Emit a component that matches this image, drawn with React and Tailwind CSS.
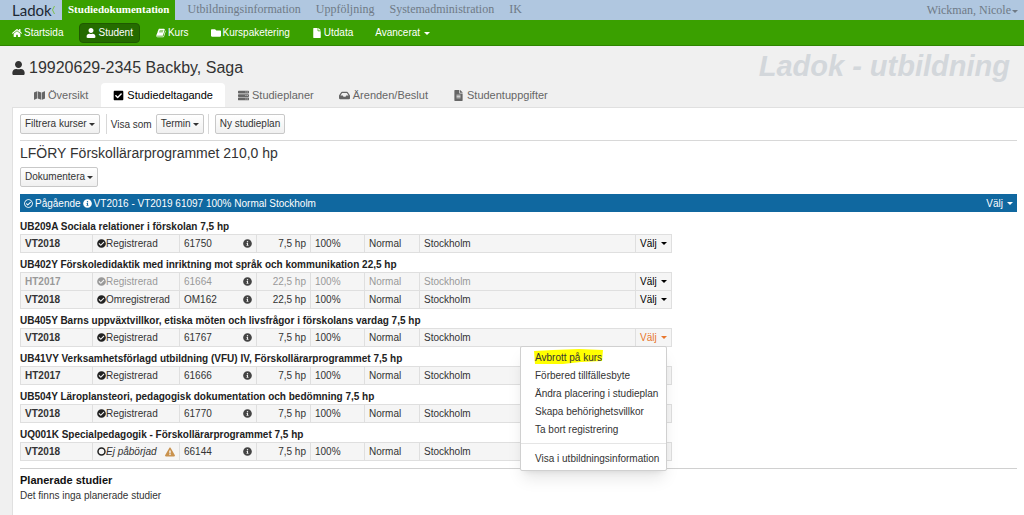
import {
  FaHome,
  FaUser,
  FaFolder,
  FaFile,
  FaMap,
  FaCheckSquare,
  FaServer,
  FaInbox,
  FaFileAlt,
  FaCheckCircle,
  FaRegCheckCircle,
  FaInfoCircle,
  FaExclamationTriangle,
} from 'react-icons/fa';

function BookIcon({ className }) {
  return (
    <svg className={className} viewBox="0 0 1664 1792" fill="currentColor">
      <path d="M1639 478q40 57 18 129l-275 906q-19 64-76.500 107.500t-122.500 43.500h-923q-77 0-148.500-53.500t-99.500-131.500q-24-67-2-127 0-4 3-27t4-37q1-8-3-21.500t-3-19.500q2-11 8-21t16.500-23.500 16.500-23.500q23-38 45-91.500t30-91.500q3-10 .5-30t-.5-28q3-11 17-28t17-23q21-36 42-92t25-90q1-9-2.500-32t.5-28q4-13 22-30.500t22-22.500q19-26 42.500-84.500t27.500-96.500q1-8-3-25.500t-2-26.500q2-8 9-18t18-23 17-21q8-12 16.500-30.500t15-35 16-36 19.500-32 26.500-23.500 36-11.500 47.500 5.500l-1 3q38-9 51-9h761q74 0 114 56t18 130l-274 906q-36 119-71.500 153.500t-128.500 34.500h-869q-27 0-38 15-11 16-1 43 24 70 144 70h923q29 0 56-15.500t35-41.500l300-987q7-22 5-57 38 15 59 43zm-1064 2q-4 13 2 22.500t20 9.500h608q13 0 25.500-9.500t16.500-22.500l21-64q4-13-2-22.500t-20-9.500h-608q-13 0-25.500 9.500t-16.500 22.500zm-83 256q-4 13 2 22.500t20 9.500h608q13 0 25.500-9.500t16.500-22.500l21-64q4-13-2-22.500t-20-9.500h-608q-13 0-25.500 9.500t-16.500 22.500z" />
    </svg>
  );
}

function RingIcon({ className }) {
  return (
    <svg className={className} viewBox="0 0 9 9" fill="none" stroke="currentColor" strokeWidth="1.5">
      <circle cx="4.5" cy="4.5" r="3.5" />
    </svg>
  );
}

const systemLinks = ['Utbildningsinformation', 'Uppföljning', 'Systemadministration', 'IK'];

const mainLinks = [
  { label: 'Startsida', icon: FaHome },
  { label: 'Student', icon: FaUser, active: true },
  { label: 'Kurs', icon: BookIcon },
  { label: 'Kurspaketering', icon: FaFolder },
  { label: 'Utdata', icon: FaFile },
];

const tabs = [
  { label: 'Översikt', icon: FaMap },
  { label: 'Studiedeltagande', icon: FaCheckSquare, active: true },
  { label: 'Studieplaner', icon: FaServer },
  { label: 'Ärenden/Beslut', icon: FaInbox },
  { label: 'Studentuppgifter', icon: FaFileAlt },
];

const courses = [
  {
    title: 'UB209A Sociala relationer i förskolan 7,5 hp',
    rows: [{ term: 'VT2018', status: 'Registrerad', code: '61750', credits: '7,5 hp' }],
  },
  {
    title: 'UB402Y Förskoledidaktik med inriktning mot språk och kommunikation 22,5 hp',
    rows: [
      { term: 'HT2017', status: 'Registrerad', code: '61664', credits: '22,5 hp', muted: true },
      { term: 'VT2018', status: 'Omregistrerad', code: 'OM162', credits: '22,5 hp' },
    ],
  },
  {
    title: 'UB405Y Barns uppväxtvillkor, etiska möten och livsfrågor i förskolans vardag 7,5 hp',
    rows: [{ term: 'VT2018', status: 'Registrerad', code: '61767', credits: '7,5 hp', open: true }],
  },
  {
    title: 'UB41VY Verksamhetsförlagd utbildning (VFU) IV, Förskollärarprogrammet 7,5 hp',
    rows: [{ term: 'HT2017', status: 'Registrerad', code: '61666', credits: '7,5 hp' }],
  },
  {
    title: 'UB504Y Läroplansteori, pedagogisk dokumentation och bedömning 7,5 hp',
    rows: [{ term: 'VT2018', status: 'Registrerad', code: '61770', credits: '7,5 hp' }],
  },
  {
    title: 'UQ001K Specialpedagogik - Förskollärarprogrammet 7,5 hp',
    rows: [{ term: 'VT2018', status: 'Ej påbörjad', code: '66144', credits: '7,5 hp', notStarted: true }],
  },
];

const menuItems = [
  'Förbered tillfällesbyte',
  'Ändra placering i studieplan',
  'Skapa behörighetsvillkor',
  'Ta bort registrering',
];

function Caret({ className = 'ml-1' }) {
  return (
    <svg className={`inline-block w-1.5 h-[3px] align-middle ${className}`} viewBox="0 0 6 3" fill="currentColor">
      <path d="M0 0h6L3 3z" />
    </svg>
  );
}

function ToolButton({ children, caret }) {
  return (
    <button
      type="button"
      className="h-5 px-1 border border-[#c8c8c8] rounded-xs bg-gradient-to-b from-white to-[#f0f0f0] text-[10px] leading-4 text-[#333] whitespace-nowrap"
    >
      {children}
      {caret && <Caret className="ml-0.5" />}
    </button>
  );
}

function CourseMenu() {
  return (
    <ul className="absolute right-1 top-full z-10 w-[147px] py-0.5 bg-white border border-[#d0d0d0] rounded-xs shadow-lg text-[#333] whitespace-nowrap">
      <li className="relative px-3.5 h-[18px] leading-[18px]">
        <svg className="absolute left-3 top-0 w-[70px] h-4" viewBox="0 0 70 16">
          <path d="M1 2 20 1 46 0 70 1 69 12 48 13 30 15 2 15z" fill="#ffff00" />
        </svg>
        <a href="#avbrott" className="relative">Avbrott på kurs</a>
      </li>
      {menuItems.map((item) => (
        <li key={item} className="px-3.5 h-[18px] leading-[18px]">
          <a href="#menu">{item}</a>
        </li>
      ))}
      <li className="mt-1 pt-1.5 px-3.5 border-t border-[#e5e5e5] leading-[18px]">
        <a href="#info">Visa i utbildningsinformation</a>
      </li>
    </ul>
  );
}

function CourseRow({ row }) {
  const cell = 'border border-[#dfdfdf] px-1 h-[18px] leading-4';
  const StatusIcon = row.notStarted ? RingIcon : FaCheckCircle;
  return (
    <tr className={row.muted ? 'text-[#999]' : 'text-[#333]'}>
      <td className={`${cell} font-bold`}>{row.term}</td>
      <td className={cell}>
        <div className="flex items-center">
          <StatusIcon className={`w-[9px] h-[9px] ${row.muted ? '' : 'text-[#222]'}`} />
          <span className={row.notStarted ? 'italic' : ''}>{row.status}</span>
          {row.notStarted && <FaExclamationTriangle className="ml-auto w-2.5 h-2.5 text-[#c9924e]" />}
        </div>
      </td>
      <td className={cell}>
        <div className="flex items-center justify-between">
          <span>{row.code}</span>
          <FaInfoCircle className="w-[9px] h-[9px] text-[#444]" />
        </div>
      </td>
      <td className={`${cell} text-right`}>{row.credits}</td>
      <td className={cell}>100%</td>
      <td className={cell}>Normal</td>
      <td className={cell}>Stockholm</td>
      <td className={`${cell} relative`}>
        <button type="button" className={`whitespace-nowrap ${row.open ? 'text-[#e8762c]' : 'text-black'}`}>
          Välj<Caret />
        </button>
        {row.open && <CourseMenu />}
      </td>
    </tr>
  );
}

function Course({ course }) {
  return (
    <section className="mb-[5px]">
      <h3 className="text-[10px] leading-[14px] font-bold text-[#222]">{course.title}</h3>
      <table className="w-[652px] table-fixed border-collapse bg-[#f5f5f5] text-[10px]">
        <colgroup>
          <col className="w-[72px]" />
          <col className="w-[87px]" />
          <col className="w-[77px]" />
          <col className="w-[54px]" />
          <col className="w-[54px]" />
          <col className="w-[55px]" />
          <col />
          <col className="w-[36px]" />
        </colgroup>
        <tbody>
          {course.rows.map((row) => (
            <CourseRow key={row.term} row={row} />
          ))}
        </tbody>
      </table>
    </section>
  );
}

function App() {
  return (
    <div className="min-h-screen flex flex-col bg-[#f0f0f0] text-[#333] font-['Liberation_Sans',Arial,sans-serif]">
      <header>
        <div className="flex h-5 bg-[#b0c7e0] text-[12px] leading-[18px] font-['Liberation_Serif',serif] text-[#6f7a86]">
          <a href="#ladok" className="flex items-center w-[62px] pl-3 font-['Lato',sans-serif] text-[15px] text-[#1c2733]">
            Ladok
            <svg className="w-[3px] h-2" viewBox="0 0 3 8" fill="none" stroke="#7cc04a">
              <path d="M2.500 0 0.500 4l2 4" />
            </svg>
          </a>
          <a href="#dok" className="px-1.5 bg-[#3aa000] text-[11px] text-white font-bold">Studiedokumentation</a>
          <nav className="flex gap-[15px] pl-3">
            {systemLinks.map((label) => (
              <a key={label} href="#system">{label}</a>
            ))}
          </nav>
          <button type="button" className="ml-auto pr-1.5">
            Wickman, Nicole<Caret className="ml-px" />
          </button>
        </div>
        <nav className="flex items-center h-[26px] pl-1.5 gap-2.5 bg-[#3aa000] border-b border-[#2f8400] text-[10px] text-white">
          {mainLinks.map(({ label, icon: Icon, active }) => (
            <a
              key={label}
              href="#main"
              className={`flex items-center gap-0.5 h-5 px-1.5 rounded-sm ${
                active ? 'bg-[#256b00] border border-[#1f5a00]' : ''
              }`}
            >
              <Icon className="w-2.5 h-2.5" />
              {label}
            </a>
          ))}
          <button type="button" className="px-1.5">
            Avancerat<Caret />
          </button>
        </nav>
      </header>

      <div className="flex items-start justify-between h-[37px] pl-3 pr-3.5">
        <h1 className="flex items-center gap-1 pt-3 text-[16px] leading-5">
          <FaUser className="w-[13px] h-3.5" />
          19920629-2345 Backby, Saga
        </h1>
        <p className="pt-1 text-[29px] leading-8 font-bold italic text-[#d3d7db]">Ladok - utbildning</p>
      </div>

      <nav className="flex gap-px h-6 pl-[22px] text-[11px] text-[#666]">
        {tabs.map(({ label, icon: Icon, active }) => (
          <a
            key={label}
            href="#tab"
            className={`flex items-center gap-[3px] px-3 ${active ? 'bg-white text-black rounded-t-sm' : ''}`}
          >
            <Icon className="w-[11px] h-[11px]" />
            {label}
          </a>
        ))}
      </nav>

      <main className="flex-1 ml-3 pl-[7px] pr-[7px] pt-1.5 bg-white border-l border-t border-[#e0e0e0] text-[10px]">
        <div className="flex items-center gap-1.5 pb-1.5 border-b border-[#d8d8d8]">
          <ToolButton caret>Filtrera kurser</ToolButton>
          <div className="flex items-center gap-1 h-5 px-1 border-x border-[#d8d8d8]">
            <span>Visa som</span>
            <ToolButton caret>Termin</ToolButton>
          </div>
          <ToolButton>Ny studieplan</ToolButton>
        </div>

        <h2 className="pt-1 mb-1.5 text-[14px] leading-4">LFÖRY Förskollärarprogrammet 210,0 hp</h2>
        <ToolButton caret>Dokumentera</ToolButton>

        <div className="flex items-center gap-0.5 mt-[7px] mb-2 h-[18px] px-1 bg-[#1068a0] text-white">
          <FaRegCheckCircle className="w-[9px] h-[9px]" />
          <span>Pågående</span>
          <FaInfoCircle className="w-[9px] h-[9px]" />
          <span>VT2016 - VT2019 61097 100% Normal Stockholm</span>
          <button type="button" className="ml-auto">
            Välj<Caret />
          </button>
        </div>

        {courses.map((course) => (
          <Course key={course.title} course={course} />
        ))}

        <section className="mt-[7px] pt-[3px] border-t border-[#d0d0d0]">
          <h3 className="text-[11px] leading-4 font-bold text-[#111]">Planerade studier</h3>
          <p className="leading-4">Det finns inga planerade studier</p>
        </section>
      </main>
    </div>
  );
}

export default App;
